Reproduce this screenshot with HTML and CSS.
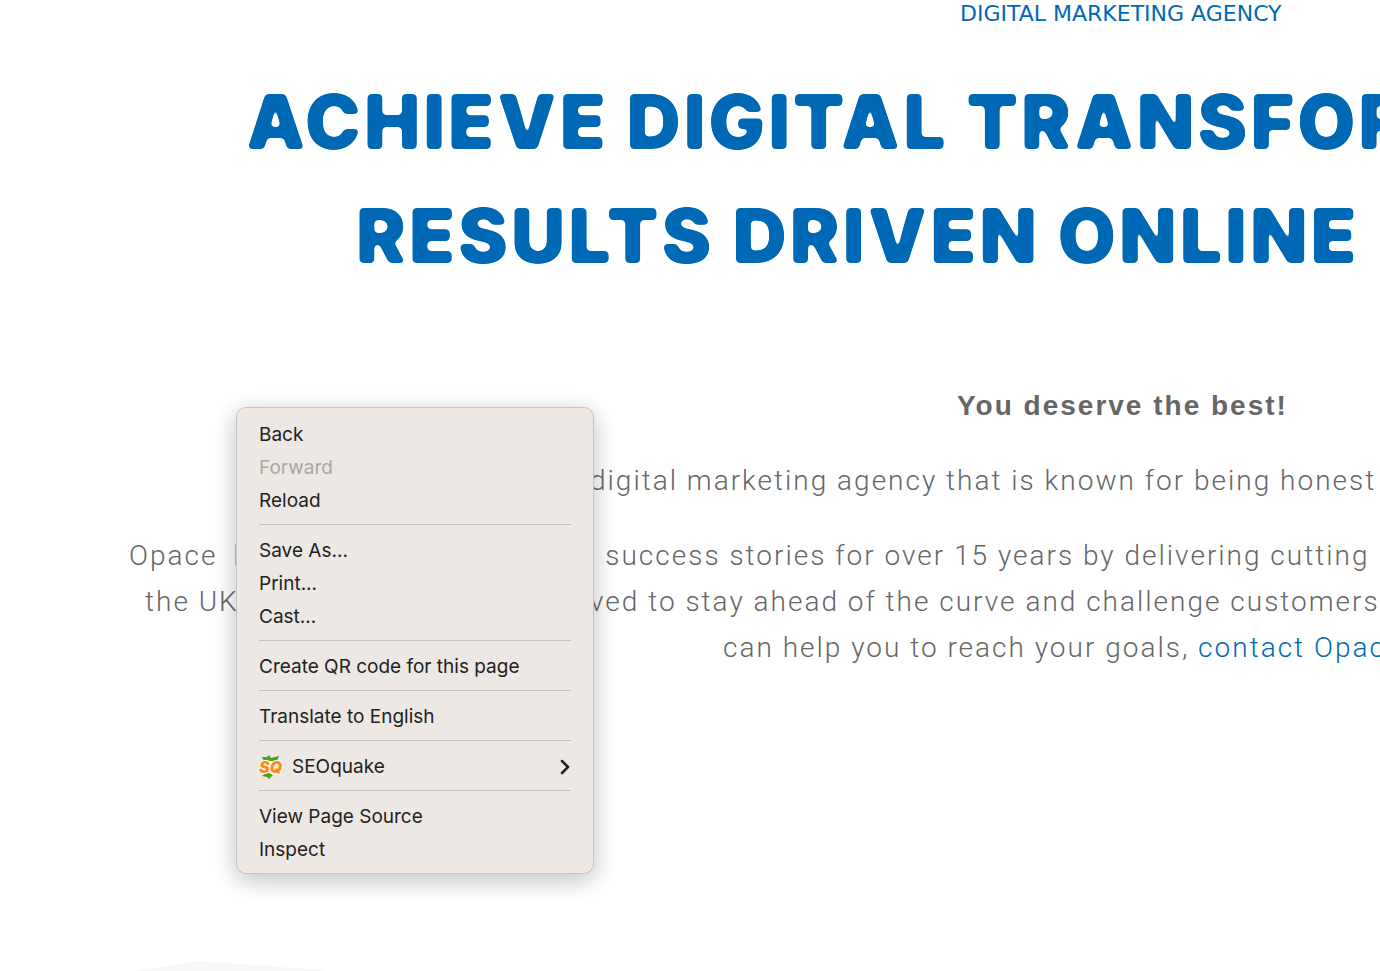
FILE: index.html
```html
<!DOCTYPE html>
<html lang="en">
  <head>
    <meta charset="UTF-8" />
    <meta name="viewport" content="width=device-width, initial-scale=1.0" />
    <title>Opace Digital Marketing Agency</title>
    <link rel="stylesheet" href="styles.css">
  </head>
  <body>
    <main class="hero">
      <p class="tagline">DIGITAL MARKETING AGENCY</p>
      <h1>
        <span class="title-line">ACHIEVE DIGITAL TRANSFOR</span>
        <span class="title-line title-second">RESULTS DRIVEN ONLINE</span>
      </h1>
      <div class="intro">
        <p class="lead">You deserve the best!</p>
        <p class="line"><span class="start"></span><span>digital marketing agency that is known for being honest</span></p>
        <div class="story">
          <p class="line"><span class="start start-short"><span>Opace</span><span>h</span></span><span>e success stories for over 15 years by delivering cutting</span></p>
          <p class="line"><span class="start start-indent">the UK</span><span>ved to stay ahead of the curve and challenge customers</span></p>
          <p class="line line-last">can help you to reach your goals,&nbsp;<a href="#">contact Opace</a></p>
        </div>
      </div>
      <svg class="peak" viewBox="0 0 200 10" aria-hidden="true">
        <path d="M0 10 L66 0 L198 10 Z" fill="#f6f7f7" />
      </svg>
    </main>

    <div class="menu">
      <button type="button">Back</button>
      <button type="button" disabled>Forward</button>
      <button type="button">Reload</button>
      <hr>
      <button type="button">Save As...</button>
      <button type="button">Print...</button>
      <button type="button">Cast...</button>
      <hr>
      <button type="button">Create QR code for this page</button>
      <hr>
      <button type="button">Translate to English</button>
      <hr>
      <button type="button">
        <svg class="sq" viewBox="0 0 24 24" aria-hidden="true">
          <path d="M3 2 L8 2 L10 0 L12 3 L20 1 L18 6 L5 6 Z" fill="#4ba21c" />
          <path d="M3 21 L8 17 L14 20 L12 22 L10 24 L8 22 Z" fill="#4ba21c" />
          <text x="0" y="18" class="sq-text">SQ</text>
        </svg>
        SEOquake
        <svg class="chevron" viewBox="0 0 12 16" aria-hidden="true">
          <path d="M3 2 L9 8 L3 14" fill="none" stroke="#222" stroke-width="2.5" stroke-linecap="round" stroke-linejoin="round" />
        </svg>
      </button>
      <hr>
      <button type="button">View Page Source</button>
      <button type="button">Inspect</button>
    </div>

    <!-- rounds off the heading letters -->
    <svg class="defs" width="0" height="0" aria-hidden="true">
      <filter id="rounded" x="0" y="0" width="100%" height="100%" color-interpolation-filters="sRGB">
        <feGaussianBlur stdDeviation="2" />
        <feColorMatrix values="0 0 0 0 0  0 0 0 0 0.41  0 0 0 0 0.71  0 0 0 7 -3" />
      </filter>
    </svg>
  </body>
</html>
```
FILE: styles.css
```css
body {
  margin: 0;
  min-height: 100vh;
  overflow: hidden;
  position: relative;
  background-color: #fff;
  color: #666;
}

p,
h1 {
  margin: 0;
}

a {
  color: #0069b4;
  text-decoration: none;
}

.hero {
  display: flex;
  flex-direction: column;
  min-height: 100vh;
  overflow: hidden;
  white-space: nowrap;
}

.tagline {
  padding-left: 960px;
  font: 22px/28px "DejaVu Sans", Verdana, sans-serif;
  color: #0069b4;
}

h1 {
  margin-top: 37px;
  padding-left: 246px;
  font: 900 75px/114px Inter, sans-serif;
  letter-spacing: 3px;
  color: #0069b4;
  filter: url(#rounded);
}

.title-line {
  display: block;
}

.title-second {
  padding-left: 110px;
}

.intro {
  display: flex;
  flex-direction: column;
  gap: 29px;
  margin-top: 90px;
  font: 300 28px/46px Roboto, "Liberation Sans", sans-serif;
  letter-spacing: 2px;
}

.lead {
  padding-left: 957px;
  font: bold 28px/46px "Liberation Sans", Arial, sans-serif;
}

.line {
  display: flex;
}

.start {
  box-sizing: border-box;
  flex: 0 0 590px;
  padding-left: 129px;
}

.start-short {
  display: flex;
  flex-basis: 580px;
  gap: 16px;
}

.start-indent {
  padding-left: 145px;
}

.line-last {
  padding-left: 723px;
}

.peak {
  width: 200px;
  height: 10px;
  margin: auto 0 0 134px;
}

.menu {
  position: absolute;
  top: 407px;
  left: 236px;
  box-sizing: border-box;
  width: 358px;
  padding: 10px 22px 7px;
  border: 1px solid #c4c4c4;
  border-radius: 10px;
  background-color: #ede8e4;
  box-shadow: 0 6px 24px rgba(0, 0, 0, 0.25);
}

.menu button {
  display: flex;
  align-items: center;
  width: 100%;
  height: 33px;
  padding: 0;
  border: none;
  background: none;
  font: 19px/33px Inter, sans-serif;
  color: #222;
  text-align: left;
}

.menu button:disabled {
  color: #a9a6a4;
}

.menu hr {
  height: 1px;
  margin: 7px 0 9px;
  border: none;
  background-color: #c2c2c2;
}

.sq {
  width: 24px;
  height: 24px;
  margin-right: 9px;
  overflow: visible;
}

.sq-text {
  font: italic 900 16px Inter, sans-serif;
  fill: #ff8a1c;
  stroke: #fff;
  stroke-width: 2px;
  paint-order: stroke;
}

.chevron {
  width: 12px;
  height: 16px;
  margin-left: auto;
}

.defs {
  position: absolute;
}
```
